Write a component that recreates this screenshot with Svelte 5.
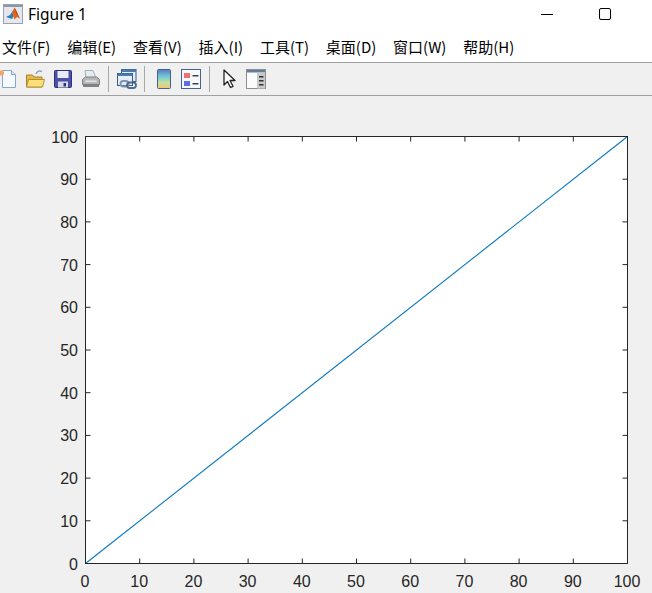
<script>
  const menus = ["文件(F)", "编辑(E)", "查看(V)", "插入(I)", "工具(T)", "桌面(D)", "窗口(W)", "帮助(H)"];

  // axes box in page pixels, the svg viewBox below starts at y=96
  const left = 85.5;
  const right = 627.5;
  const top = 136.5;
  const bottom = 563.5;
  const ticks = [0, 10, 20, 30, 40, 50, 60, 70, 80, 90, 100];
  const tickLen = 5;

  const xAt = (v) => left + ((right - left) * v) / 100;
  const yAt = (v) => bottom - ((bottom - top) * v) / 100;
</script>

<div class="window">
  <!-- Title bar -->
  <header class="titlebar">
    <svg class="app-icon" viewBox="0 0 20 20" width="20" height="20">
      <rect x="0.500" y="0.500" width="19" height="19" fill="#e4e8ee" stroke="#9aa3ad" />
      <rect x="1" y="1" width="18" height="2" fill="#8d98a5" />
      <path d="M3 13l4-2 4-6 2 3-4 7z" fill="#2f7fb8" />
      <path d="M9 9l2.500-5.500c1.500 2 3.500 7 5.500 11l-3 -1.500-2.500 2.500z" fill="#e2681f" />
      <path d="M11.500 3.500c1.500 2 3 7 5.500 11l-4-5z" fill="#b8401a" />
    </svg>
    <span class="title">Figure 1</span>
    <div class="window-buttons">
      <span class="minimize"></span>
      <span class="maximize"></span>
    </div>
  </header>

  <!-- Menu bar -->
  <nav class="menubar">
    {#each menus as item}
      <span>{item}</span>
    {/each}
  </nav>

  <!-- Toolbar -->
  <div class="toolbar">
    <!-- new -->
    <svg viewBox="0 0 20 20" width="20" height="20">
      <path d="M4.500 1.500h9l4 4v13h-13z" fill="#f6fafe" stroke="#86a9cb" />
      <path d="M13.500 1.500v4h4" fill="#d3e2f0" stroke="#86a9cb" />
      <circle cx="3.500" cy="4" r="2.500" fill="#f4a460" />
    </svg>
    <!-- open -->
    <svg class="open" viewBox="0 0 20 20" width="20" height="20">
      <path d="M11 5c1-2.500 3.500-3.500 6-2.500" fill="none" stroke="#8ba6bf" stroke-width="1.600" />
      <path d="M1.500 18V6h6l1.500 2h8v10z" fill="#e6b94a" stroke="#a5842c" />
      <path d="M1.500 18l2-7.500h16l-2 7.500z" fill="#fbdf7a" stroke="#b58f30" />
    </svg>
    <!-- save -->
    <svg viewBox="0 0 20 20" width="20" height="20">
      <rect x="1.500" y="1.500" width="17" height="17" rx="1" fill="#4a4fa8" stroke="#2e3277" />
      <rect x="4.500" y="2" width="11" height="7" fill="#e8ecf8" />
      <rect x="5" y="12.500" width="10" height="6" fill="#d8d8e4" />
      <rect x="10.500" y="14" width="2.500" height="3.500" fill="#2e3277" />
    </svg>
    <!-- print -->
    <svg viewBox="0 0 20 20" width="20" height="20">
      <path d="M5 9l-1-7.500h8l3 7.500z" fill="#e6ebf0" stroke="#a4aeb8" />
      <path d="M1.500 10.500l3-2.500h11l3 2.500v5h-17z" fill="#b4b6b8" stroke="#7d8083" />
      <path d="M2 15.500h16v2.500h-16z" fill="#7f8285" />
      <rect x="4.500" y="11.500" width="11" height="1.500" fill="#e6e6e6" />
    </svg>
    <span class="sep sep-a"></span>
    <!-- link -->
    <svg viewBox="0 0 20 20" width="20" height="20">
      <rect x="4.500" y="0.500" width="14.500" height="12" fill="#e6edf5" stroke="#33598a" />
      <rect x="4.500" y="0.500" width="14.500" height="2.500" fill="#4f7aad" />
      <rect x="0.500" y="4.500" width="15" height="12" fill="#e6edf5" stroke="#33598a" />
      <rect x="0.500" y="4.500" width="15" height="2.500" fill="#4f7aad" />
      <rect x="3.500" y="12" width="8" height="5.500" rx="2.700" fill="none" stroke="#7b93ad" stroke-width="1.800" />
      <rect x="10" y="13.500" width="9" height="5.500" rx="2.700" fill="none" stroke="#4c6a8d" stroke-width="1.800" />
    </svg>
    <span class="sep sep-b"></span>
    <!-- colorbar -->
    <svg viewBox="0 0 20 20" width="20" height="20">
      <defs>
        <linearGradient id="parula" x1="0" y1="0" x2="0" y2="1">
          <stop offset="0" stop-color="#5a78c8" />
          <stop offset="0.4" stop-color="#74cfd0" />
          <stop offset="0.7" stop-color="#c8e0a0" />
          <stop offset="1" stop-color="#f8c070" />
        </linearGradient>
      </defs>
      <rect x="3.500" y="0.500" width="13" height="19" rx="1" fill="url(#parula)" stroke="#47618a" />
    </svg>
    <!-- legend -->
    <svg class="legend" viewBox="0 0 20 20" width="20" height="20">
      <rect x="0.500" y="0.500" width="19" height="19" fill="#f6f8fb" stroke="#47618a" />
      <rect x="3" y="4" width="6" height="5" fill="#ee6f6f" />
      <rect x="3" y="12" width="6" height="5" fill="#5f6fe0" />
      <rect x="11.500" y="6" width="6" height="1.500" fill="#444" />
      <rect x="11.500" y="14" width="6" height="1.500" fill="#444" />
    </svg>
    <span class="sep sep-c"></span>
    <!-- pointer -->
    <svg class="pointer" viewBox="0 0 20 20" width="20" height="20">
      <path d="M5 1v15l3.500-3.500 3 6 2.500-1.200-3-5.800h5z" fill="#fff" stroke="#222" stroke-width="1.300" stroke-linejoin="round" />
    </svg>
    <!-- property panel -->
    <svg class="panel" viewBox="0 0 20 20" width="20" height="20">
      <rect x="0.500" y="0.500" width="19" height="19" fill="#fbfbfb" stroke="#8a8f94" />
      <rect x="1" y="1" width="18" height="2.500" fill="#5f7f9c" />
      <rect x="11" y="3.500" width="8" height="16" fill="#c9c9c9" />
      <rect x="13" y="7" width="4.500" height="1.500" fill="#333" />
      <rect x="13" y="11" width="4.500" height="1.500" fill="#333" />
      <rect x="13" y="15" width="4.500" height="1.500" fill="#333" />
    </svg>
  </div>

  <!-- Plot area -->
  <svg class="plot" viewBox="0 96 652 497" width="652" height="497">
    <rect x={left} y={top} width={right - left} height={bottom - top} fill="#fff" />
    <line class="series" x1={left} y1={bottom} x2={right} y2={top} />
    <rect class="axes" x={left} y={top} width={right - left} height={bottom - top} />
    {#each ticks as t}
      <line class="axes" x1={xAt(t)} y1={bottom} x2={xAt(t)} y2={bottom - tickLen} />
      <line class="axes" x1={xAt(t)} y1={top} x2={xAt(t)} y2={top + tickLen} />
      <line class="axes" x1={left} y1={yAt(t)} x2={left + tickLen} y2={yAt(t)} />
      <line class="axes" x1={right} y1={yAt(t)} x2={right - tickLen} y2={yAt(t)} />
      <text x={xAt(t) - 0.500} y="587" text-anchor="middle">{t}</text>
      <text x="78" y={yAt(t) + 6} text-anchor="end">{t}</text>
    {/each}
  </svg>
</div>

<style>
  :global(body) {
    margin: 0;
    background: #f0f0f0;
  }

  .window {
    width: 652px;
    height: 593px;
    overflow: hidden;
    display: flex;
    flex-direction: column;
    background: #f0f0f0;
  }

  .titlebar {
    height: 28px;
    padding: 0 0 3px 3px;
    background: #fff;
    display: flex;
    align-items: center;
  }

  .app-icon {
    margin-right: 5px;
  }

  .title {
    font: 15.5px "Noto Sans", "Open Sans", sans-serif;
    color: #000;
  }

  .window-buttons {
    margin-left: auto;
    display: flex;
    align-items: center;
    margin-right: 41px;
  }

  .minimize {
    width: 12px;
    height: 1px;
    background: #000;
    margin-right: 46px;
  }

  .maximize {
    width: 10px;
    height: 10px;
    border: 1px solid #000;
    border-radius: 2px;
  }

  .menubar {
    height: 31px;
    background: #fff;
    display: flex;
    align-items: center;
    padding-left: 2px;
    gap: 16.800px;
    font: 15px "Noto Sans CJK SC", "Noto Sans", sans-serif;
    color: #000;
    white-space: nowrap;
    border-bottom: 1px solid #a0a0a0;
  }

  .toolbar {
    height: 32px;
    display: flex;
    align-items: center;
    gap: 8px;
    margin-left: -2px;
    border-bottom: 1px solid #a0a0a0;
  }

  .sep {
    width: 1px;
    height: 26px;
    background: #a8a8a8;
  }

  .sep-a {
    margin: 0 0 0 -1px;
  }

  .sep-b {
    margin: 0 1px 0 -1px;
  }

  .sep-c {
    margin-right: 2px;
  }

  .open {
    margin-left: -1px;
  }

  .legend {
    margin-left: -1px;
  }

  .pointer {
    margin-left: -1px;
  }

  .panel {
    margin-left: -1px;
  }

  .plot {
    display: block;
    flex: none;
  }

  .axes {
    fill: none;
    stroke: #262626;
    stroke-width: 1;
  }

  .series {
    stroke: #0a78c0;
    stroke-width: 1.100;
  }

  text {
    font: 16px "Liberation Sans", Arial, sans-serif;
    fill: #262626;
  }
</style>
